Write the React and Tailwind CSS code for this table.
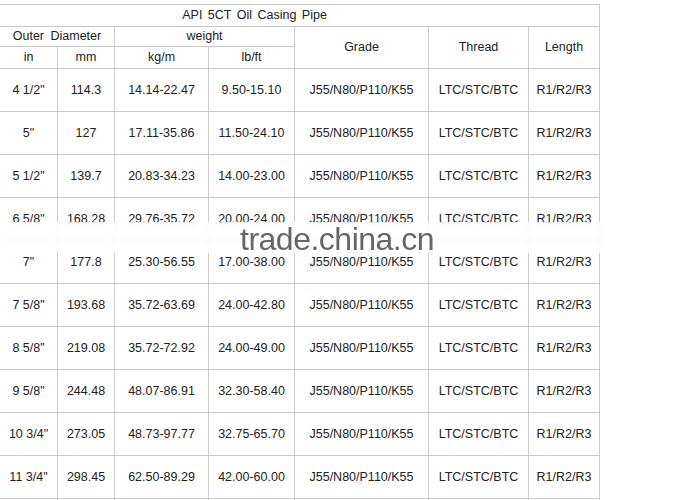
const rows = [
  ['4 1/2"', '114.3', '14.14-22.47', '9.50-15.10'],
  ['5"', '127', '17.11-35.86', '11.50-24.10'],
  ['5 1/2"', '139.7', '20.83-34.23', '14.00-23.00'],
  ['6 5/8"', '168.28', '29.76-35.72', '20.00-24.00'],
  ['7"', '177.8', '25.30-56.55', '17.00-38.00'],
  ['7 5/8"', '193.68', '35.72-63.69', '24.00-42.80'],
  ['8 5/8"', '219.08', '35.72-72.92', '24.00-49.00'],
  ['9 5/8"', '244.48', '48.07-86.91', '32.30-58.40'],
  ['10 3/4"', '273.05', '48.73-97.77', '32.75-65.70'],
  ['11 3/4"', '298.45', '62.50-89.29', '42.00-60.00'],
]

const cell = 'border border-[#cbcbcb] text-center align-middle p-0 whitespace-nowrap'

export default function App() {
  return (
    <div className="relative w-[680px] h-[500px] overflow-hidden bg-white pt-1 text-[12.5px] text-[#222]" style={{ fontFamily: '"Liberation Sans", Arial, sans-serif' }}>
      <table className="w-[600px] table-fixed border-collapse -ml-px">
        <colgroup>
          <col className="w-[58px]" />
          <col className="w-[57px]" />
          <col className="w-[94px]" />
          <col className="w-[86px]" />
          <col className="w-[134px]" />
          <col className="w-[100px]" />
          <col className="w-[71px]" />
        </colgroup>
        <thead>
          <tr className="h-[22px]">
            <th colSpan={7} className={`${cell} font-normal pr-[90px] [word-spacing:2px]`}>
              API 5CT Oil Casing Pipe
            </th>
          </tr>
          <tr className="h-[20px]">
            <th colSpan={2} className={`${cell} font-normal [word-spacing:3px]`}>Outer Diameter</th>
            <th colSpan={2} className={`${cell} font-normal`}>weight</th>
            <th rowSpan={2} className={`${cell} font-normal`}>Grade</th>
            <th rowSpan={2} className={`${cell} font-normal`}>Thread</th>
            <th rowSpan={2} className={`${cell} font-normal`}>Length</th>
          </tr>
          <tr className="h-[22px]">
            <th className={`${cell} font-normal`}>in</th>
            <th className={`${cell} font-normal`}>mm</th>
            <th className={`${cell} font-normal`}>kg/m</th>
            <th className={`${cell} font-normal`}>lb/ft</th>
          </tr>
        </thead>
        <tbody>
          {rows.map((r) => (
            <tr key={r[0]} className="h-[43px]">
              <td className={cell}>{r[0]}</td>
              <td className={cell}>{r[1]}</td>
              <td className={cell}>{r[2]}</td>
              <td className={cell}>{r[3]}</td>
              <td className={cell}>J55/N80/P110/K55</td>
              <td className={cell}>LTC/STC/BTC</td>
              <td className={cell}>R1/R2/R3</td>
            </tr>
          ))}
          <tr className="h-[43px]">
            <td className={cell} />
            <td className={cell} />
            <td className={cell} />
            <td className={cell} />
            <td className={cell} />
            <td className={cell} />
            <td className={cell} />
          </tr>
        </tbody>
      </table>

      {/* watermark band */}
      <div className="absolute left-0 right-0 top-[222px] h-[31px] bg-white/70 backdrop-blur-[3px]" />
      <div className="absolute left-[240px] top-[223px] text-[32px] leading-none text-[#666] tracking-[-0.5px]">
        trade.china.cn
      </div>
    </div>
  )
}
